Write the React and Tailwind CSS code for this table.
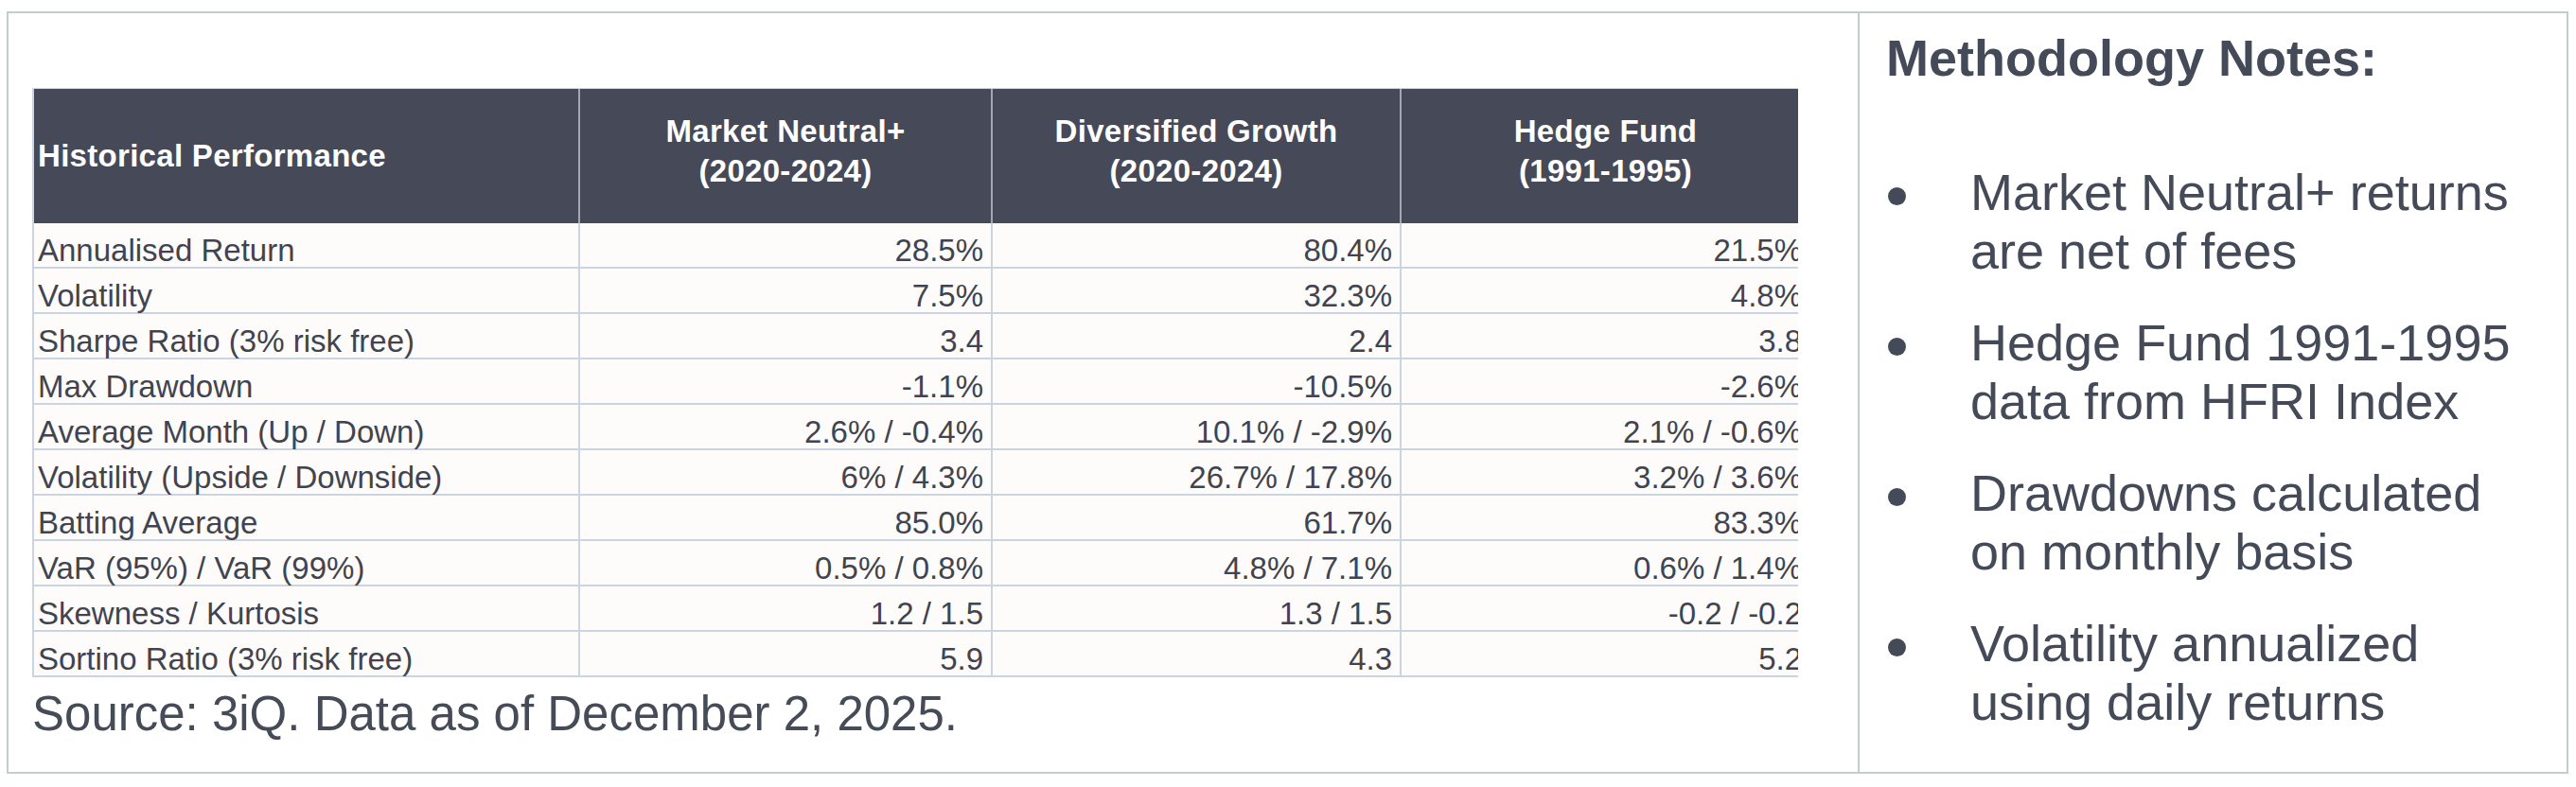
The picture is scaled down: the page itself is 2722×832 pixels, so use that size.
import React from 'react';

const rows = [
  ['Annualised Return', '28.5%', '80.4%', '21.5%'],
  ['Volatility', '7.5%', '32.3%', '4.8%'],
  ['Sharpe Ratio (3% risk free)', '3.4', '2.4', '3.8'],
  ['Max Drawdown', '-1.1%', '-10.5%', '-2.6%'],
  ['Average Month (Up / Down)', '2.6% / -0.4%', '10.1% / -2.9%', '2.1% / -0.6%'],
  ['Volatility (Upside / Downside)', '6% / 4.3%', '26.7% / 17.8%', '3.2% / 3.6%'],
  ['Batting Average', '85.0%', '61.7%', '83.3%'],
  ['VaR (95%) / VaR (99%)', '0.5% / 0.8%', '4.8% / 7.1%', '0.6% / 1.4%'],
  ['Skewness / Kurtosis', '1.2 / 1.5', '1.3 / 1.5', '-0.2 / -0.2'],
  ['Sortino Ratio (3% risk free)', '5.9', '4.3', '5.2'],
];

const columns = [
  ['Market Neutral+', '(2020-2024)'],
  ['Diversified Growth', '(2020-2024)'],
  ['Hedge Fund', '(1991-1995)'],
];

const notes = [
  ['Market Neutral+ returns', 'are net of fees'],
  ['Hedge Fund 1991-1995', 'data from HFRI Index'],
  ['Drawdowns calculated', 'on monthly basis'],
  ['Volatility annualized', 'using daily returns'],
];

function PerformanceTable() {
  // the last column runs past the panel edge and is clipped, as in the source sheet
  return (
    <div className="w-[1866px] overflow-hidden">
      <div className="w-[1878px] border-t border-l-2 border-[#cbd4e1]">
        <div className="grid h-[142px] grid-cols-[577px_436px_432px_431px] bg-[#464957] text-[33px] font-bold tracking-[0.3px] text-white">
          <div className="flex items-center border-r-2 border-[#a3a7b3] pl-[4px]">
            Historical Performance
          </div>
          {columns.map(([name, years], i) => (
            <div
              key={name}
              className={`flex flex-col items-center justify-center pb-[10px] leading-[42px] ${
                i < 2 ? 'border-r-2 border-[#a3a7b3]' : ''
              }`}
            >
              <span>{name}</span>
              <span>{years}</span>
            </div>
          ))}
        </div>

        {rows.map(([label, a, b, c]) => (
          <div
            key={label}
            className="grid h-[48px] grid-cols-[577px_436px_432px_431px] border-b-2 border-[#cbd4e1] bg-[#fdfcfa] text-[33px] leading-[34px] text-[#41444f]"
          >
            <div className="flex items-end border-r-2 border-[#cbd4e1] pl-[4px]">{label}</div>
            <div className="flex items-end justify-end border-r-2 border-[#cbd4e1] pr-[8px]">{a}</div>
            <div className="flex items-end justify-end border-r-2 border-[#cbd4e1] pr-[8px]">{b}</div>
            <div className="flex items-end justify-end pr-[8px]">{c}</div>
          </div>
        ))}
      </div>
    </div>
  );
}

export default function App() {
  return (
    <div className="min-h-screen bg-white pl-[7px] pt-[12px] font-['Liberation_Sans',Arial,sans-serif]">
      <div className="flex h-[806px] w-[2707px] border-2 border-[#c3cdcc]">
        <div className="w-[1956px] shrink-0 border-r-2 border-[#c3cdcc] pl-[25px] pt-[79px]">
          <PerformanceTable />
          <p className="mt-[10px] text-[51px] leading-[58px] text-[#454b57]">
            Source: 3iQ. Data as of December 2, 2025.
          </p>
        </div>

        <div className="flex-1 pl-[26px] pt-[16px] text-[#444a57]">
          <h2 className="ml-[2px] text-[54px] font-bold leading-[62px]">Methodology Notes:</h2>
          <ul className="mt-[80px] flex flex-col gap-[35px]">
            {notes.map(([first, second]) => (
              <li key={first} className="flex text-[54px] leading-[62px]">
                <span className="w-[91px] shrink-0">
                  <span className="ml-[4px] mt-[26px] block h-[19px] w-[19px] rounded-full bg-[#444a57]" />
                </span>
                <span>
                  <span className="block">{first}</span>
                  <span className="block">{second}</span>
                </span>
              </li>
            ))}
          </ul>
        </div>
      </div>
    </div>
  );
}
